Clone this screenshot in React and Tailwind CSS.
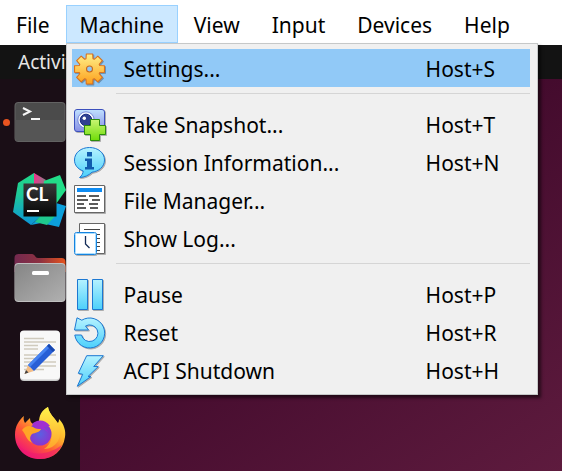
import React from "react";

const BLUE = "#1c78d2";

function gearPath(cx, cy) {
  const parts = [];
  for (let i = 0; i < 8; i++) {
    const base = (i * Math.PI) / 4 - Math.PI / 2;
    [[-0.33, 10.8], [-0.21, 15.3], [0.21, 15.3], [0.33, 10.8]].forEach(([a, r]) => {
      parts.push(`${(cx + r * Math.cos(base + a)).toFixed(2)} ${(cy + r * Math.sin(base + a)).toFixed(2)}`);
    });
  }
  return `M${parts.join("L")}Z`;
}

function MenuSvg({ children }) {
  return (
    <svg className="size-8 shrink-0 overflow-visible drop-shadow-[1px_1px_0px_rgba(0,0,0,0.28)]" viewBox="0 0 32 32" fill="none" aria-hidden="true">
      <defs>
        <linearGradient id="sky" x1="0" y1="0" x2="0" y2="1">
          <stop stopColor="#b5f2ff" />
          <stop offset="1" stopColor="#4cd0fb" />
        </linearGradient>
        <linearGradient id="gold" x1="0" y1="0" x2="0" y2="1">
          <stop stopColor="#fff08a" />
          <stop offset="1" stopColor="#fda01c" />
        </linearGradient>
        <linearGradient id="camera" x1="0" y1="0" x2="0" y2="1">
          <stop stopColor="#bfe0ff" />
          <stop offset="1" stopColor="#8890e4" />
        </linearGradient>
        <linearGradient id="lime" x1="0" y1="0" x2="0" y2="1">
          <stop stopColor="#c9f573" />
          <stop offset="1" stopColor="#6fdc08" />
        </linearGradient>
      </defs>
      {children}
    </svg>
  );
}

const icons = {
  settings: (
    <>
      <path d={gearPath(15.5, 16)} fill="url(#gold)" stroke="#dc711c" strokeWidth="1.1" strokeLinejoin="round" />
      <circle cx="15.5" cy="16" r="3" fill="#8fc6f5" stroke="#c8691c" strokeWidth="1.1" />
    </>
  ),
  snapshot: (
    <>
      <rect x="0.5" y="0.5" width="30" height="22" rx="2.5" fill="url(#camera)" stroke="#3c50bd" />
      <circle cx="12" cy="11" r="8.2" fill="#f3f7ff" stroke="#6275d0" strokeWidth="0.8" />
      <circle cx="12" cy="11" r="5.8" fill="#304191" stroke="#1b2b86" />
      <circle cx="10.3" cy="9.3" r="1.7" fill="#fff" />
      <path d="M16.5 10.5h9v6h6v9h-6v6h-9v-6h-6v-9h6z" fill="url(#lime)" stroke="#2b8b0c" />
    </>
  ),
  info: (
    <>
      <path d="M15.5.5C24 .5 30.5 5.8 30.5 13S24 24.5 18 25.2C14.5 28.5 10.5 30.3 5.5 30.5C8 28.5 9 26.5 9.2 24C3.5 21.8.5 18 .5 13C.5 5.8 7 .5 15.5.5Z" fill="url(#sky)" stroke={BLUE} strokeLinejoin="round" />
      <path d="M13 5h5v4.500h-5zM11 11.500h7v8.500h2v2.500h-9v-2.500h2v-6h-2z" fill="#105cae" />
    </>
  ),
  files: (
    <>
      <path d="M.5.5h30v27H.5z" fill="#fff" stroke="#666" />
      <path d="M3 3h25v4H3z" fill="#0d8bf2" />
      <path d="M3 11h9M3 15h11M3 19h7M3 23h9M15 11h10M18 15h8M15 19h9M16 23h8" stroke="#5b5b5b" strokeWidth="2" />
    </>
  ),
  log: (
    <>
      <path d="M5.5.5h25v30h-25z" fill="#fff" stroke="#666" />
      <path d="M10 6.5h16M14 11.5h12M23 15.5h3M23 19.5h3M23 23.5h3M23 27.5h3" stroke="#444" />
      <rect x="0.5" y="9.5" width="22" height="22" rx="2" fill="#fff" stroke="#1583df" />
      <rect x="1.5" y="10.5" width="20" height="20" rx="1" stroke="#a9deff" />
      <path d="M11.5 13v8l4 4" stroke="#142c58" strokeWidth="1.3" />
    </>
  ),
  pause: (
    <path d="M3.5.5h10v30h-10zM18.5.5h10v30h-10z" fill="url(#sky)" stroke={BLUE} />
  ),
  reset: (
    <path d="M3 .8L7.8 3.2A15 15 0 1 1 .8 18H7.5A8.300 8.300 0 1 0 11.500 9L14.500 13H.5Z" fill="url(#sky)" stroke={BLUE} strokeLinejoin="round" />
  ),
  power: (
    <path d="M12.7.7H29.3L19.7 11.5H24.3L14 21.5H17L3.3 31.3L8.7 19.3L4.3 18.3Z" fill="url(#sky)" stroke={BLUE} strokeLinejoin="round" />
  ),
};

const groups = [
  [{ icon: "settings", label: "Settings...", key: "Host+S", active: true }],
  [
    { icon: "snapshot", label: "Take Snapshot...", key: "Host+T" },
    { icon: "info", label: "Session Information...", key: "Host+N" },
    { icon: "files", label: "File Manager..." },
    { icon: "log", label: "Show Log..." },
  ],
  [
    { icon: "pause", label: "Pause", key: "Host+P" },
    { icon: "reset", label: "Reset", key: "Host+R" },
    { icon: "power", label: "ACPI Shutdown", key: "Host+H" },
  ],
];

function MachineMenu() {
  return (
    <div role="menu" aria-label="Machine" className="absolute top-full left-0 z-10 w-[472px] border border-[#c6c8c8] bg-[#f0f0f0] py-[5px] pr-[7px] pl-[5px] shadow-[3px_3px_3px_rgba(0,0,0,0.55)]">
      {groups.map((items, g) => (
        <React.Fragment key={g}>
          {g > 0 && <hr className="mt-1.5 mb-[11px] ml-11 border-t border-[#d5d5d5]" />}
          {items.map((item) => (
            <button
              key={item.label}
              type="button"
              role="menuitem"
              className={`flex h-[38px] w-full items-center pt-0.5 pl-0.5 text-left ${item.active ? "bg-[#91c9f7]" : ""}`}
            >
              <MenuSvg>{icons[item.icon]}</MenuSvg>
              <span className="ml-[18px] flex-1 whitespace-nowrap">{item.label}</span>
              {item.key && <span className="w-[104px] whitespace-nowrap">{item.key}</span>}
            </button>
          ))}
        </React.Fragment>
      ))}
    </div>
  );
}

function TerminalIcon() {
  return (
    <svg viewBox="0 0 52 54" className="h-[54px] w-[52px]" aria-hidden="true">
      <rect x="0.5" y="7" width="51" height="40" rx="4" fill="#626262" />
      <rect x="1.5" y="8" width="49" height="38" rx="3" fill="#4b4b4b" />
      <path d="M1.5 25h49v18a3 3 0 0 1-3 3h-43a3 3 0 0 1-3-3z" fill="#555" />
      <path d="M9 13l7 3.5L9 20" fill="none" stroke="#f4f4f4" strokeWidth="2" />
      <path d="M17 24h9" stroke="#f4f4f4" strokeWidth="2" />
    </svg>
  );
}

function ClionIcon() {
  return (
    <svg viewBox="0 0 54 56" className="h-14 w-[54px]" aria-hidden="true">
      <defs>
        <linearGradient id="cl1" x1="0" y1="0" x2="0" y2="1">
          <stop stopColor="#21d789" />
          <stop offset="0.4" stopColor="#1fcb98" />
          <stop offset="1" stopColor="#0c94d8" />
        </linearGradient>
        <linearGradient id="cl2" x1="0" y1="0" x2="1" y2="0">
          <stop stopColor="#ed358c" />
          <stop offset="1" stopColor="#8a7f88" />
        </linearGradient>
        <linearGradient id="cl3" x1="0" y1="0" x2="0" y2="1">
          <stop stopColor="#383838" />
          <stop offset="1" stopColor="#050505" />
        </linearGradient>
      </defs>
      <path d="M21 1L5 11L0 40L18 53L28 44L32 12Z" fill="url(#cl1)" />
      <path d="M21 1L33 8L29 16H21Z" fill="url(#cl2)" />
      <path d="M31 9L47 3L53 18L43 32L30 24Z" fill="#22dc88" />
      <path d="M18 53L30 43H43V31L53 34L46 55L28 51Z" fill="#0c9fdb" />
      <path d="M22 50L28 43H43L34 53Z" fill="#1fc98e" />
      <rect x="10.5" y="11.5" width="33" height="33" fill="url(#cl3)" />
      <text x="13" y="29" fill="#fff" className="font-['Lato','Noto_Sans',sans-serif] text-[19px] font-bold">CL</text>
      <path d="M14 39h12" stroke="#fff" strokeWidth="2" />
    </svg>
  );
}

function FolderIcon() {
  return (
    <svg viewBox="0 0 52 54" className="h-[54px] w-[52px]" aria-hidden="true">
      <defs>
        <linearGradient id="fold" x1="0" y1="0" x2="1" y2="0">
          <stop stopColor="#73294f" />
          <stop offset="0.5" stopColor="#8d3141" />
          <stop offset="1" stopColor="#e6541e" />
        </linearGradient>
        <linearGradient id="front" x1="0" y1="0" x2="1" y2="1">
          <stop stopColor="#858585" />
          <stop offset="1" stopColor="#b0b0b0" />
        </linearGradient>
      </defs>
      <path d="M.5 7a4 4 0 0 1 4-4H18c3 0 3 4 6 4h23.5a4 4 0 0 1 4 4v10H.5z" fill="url(#fold)" />
      <rect x="0.5" y="12" width="51" height="39" rx="4" fill="#c0c0c0" />
      <rect x="1" y="13" width="50" height="37" rx="3.5" fill="url(#front)" />
      <rect x="18" y="20" width="17" height="4" rx="1.5" fill="#fff" />
    </svg>
  );
}

function EditorIcon() {
  return (
    <svg viewBox="0 0 52 54" className="h-[54px] w-[52px]" aria-hidden="true">
      <rect x="6" y="2" width="40" height="50" rx="4" fill="#c9c9c9" />
      <rect x="6" y="1.5" width="40" height="49" rx="4" fill="#f8f8f8" />
      <path d="M10 9.5h20M10 13h32M10 16.5h14M10 20h14M10 26h32M10 29.5h14M10 33h32M10 37h32M10 40.5h20" stroke="#cfcabd" strokeWidth="1.6" />
      <path d="M10.5 45L14 36L20 42Z" fill="#f2bd88" />
      <path d="M10.5 45L12 41L14.5 43.5Z" fill="#444" />
      <path d="M14 36L35 15L41 21L20 42Z" fill="#285fd6" />
      <path d="M14 36L35 15L37 17L16 38Z" fill="#4784f2" />
      <path d="M33 17L35 15L41 21L39 23Z" fill="#1747ae" />
    </svg>
  );
}

function FirefoxIcon() {
  return (
    <svg viewBox="0 0 52 54" className="h-[54px] w-[52px]" aria-hidden="true">
      <defs>
        <linearGradient id="fx1" x1="0.85" y1="0.1" x2="0.25" y2="0.95">
          <stop stopColor="#fff044" />
          <stop offset="0.35" stopColor="#ffb52b" />
          <stop offset="0.65" stopColor="#ff5a36" />
          <stop offset="1" stopColor="#f01478" />
        </linearGradient>
        <linearGradient id="fx2" x1="0" y1="0" x2="0" y2="1">
          <stop stopColor="#fff24b" />
          <stop offset="1" stopColor="#ffa42b" />
        </linearGradient>
        <radialGradient id="fx3">
          <stop stopColor="#5b60e2" />
          <stop offset="1" stopColor="#8a35cf" />
        </radialGradient>
      </defs>
      <path d="M10 9C9 12 10 14 11 16L16 11C16 14 17 16 19 17C23 14 25 14 26 13C26 8 29 3 34 0C35 7 40 10 43 15C44 17 45 15 45 12C50 17 52 24 51 30C49 44 39 52 26 52C12 52 1 42 1 28C1 19 5 13 10 9Z" fill="url(#fx1)" />
      <path d="M34 0C35 7 41 11 44 17C50 30 42 42 30 42C38 37 39 28 36 22C34 17 29 15 25 15C25 8 28 3 34 0Z" fill="url(#fx2)" />
      <circle cx="26" cy="27" r="11.5" fill="url(#fx3)" />
      <path d="M18 17C23 12 31 12 36 19L30 20L35 26C30 21 27 22 24 23Z" fill="#a12fd2" />
      <path d="M8 23C11 19 15 18 19 20C22 22 24 22 27 22C26 25 21 26 18 27C15 30 16 34 19 36C12 34 12 27 8 23Z" fill="#ffa526" />
      <path d="M3 36C10 47 29 52 48 38C44 47 36 52 26 52C14 52 6 46 3 36Z" fill="#ed1b70" opacity="0.6" />
    </svg>
  );
}

const dock = [
  { name: "Terminal", Icon: TerminalIcon, running: true },
  { name: "CLion", Icon: ClionIcon },
  { name: "Files", Icon: FolderIcon },
  { name: "Text Editor", Icon: EditorIcon },
  { name: "Firefox", Icon: FirefoxIcon },
];

export default function App() {
  return (
    <div className="flex min-h-screen flex-col overflow-hidden bg-white font-['Noto_Sans',sans-serif] text-[21px] leading-7 text-black">
      <nav className="flex h-[45px] shrink-0 items-start bg-white pt-[5px]" aria-label="Virtual machine menu bar">
        {["File", "Machine", "View", "Input", "Devices", "Help"].map((name) => (
          <div key={name} className="relative">
            <button
              type="button"
              aria-haspopup="menu"
              aria-expanded={name === "Machine"}
              className={`block h-[38px] border pt-0.5 ${name === "Machine" ? "border-[#99d1ff] bg-[#cce8ff] px-[13px]" : "border-transparent px-[15px]"}`}
            >
              {name}
            </button>
            {name === "Machine" && <MachineMenu />}
          </div>
        ))}
      </nav>
      <div className="flex h-[34px] shrink-0 items-center bg-[#131313] px-[18px]">
        <button type="button" className="text-[19px] text-[#e6e6e6]">Activities</button>
      </div>
      <main className="flex flex-1 bg-linear-to-br from-[#2c001e] to-[#5e1b3e]">
        <aside className="flex w-20 flex-col bg-[#1a0e16] pt-1" aria-label="Dock">
          {dock.map(({ name, Icon, running }) => (
            <button key={name} type="button" aria-label={name} className="relative flex h-[78px] items-center justify-center">
              {running && <span className="absolute left-[3px] size-[7px] rounded-full bg-[#e95420]" />}
              <Icon />
            </button>
          ))}
        </aside>
      </main>
    </div>
  );
}
